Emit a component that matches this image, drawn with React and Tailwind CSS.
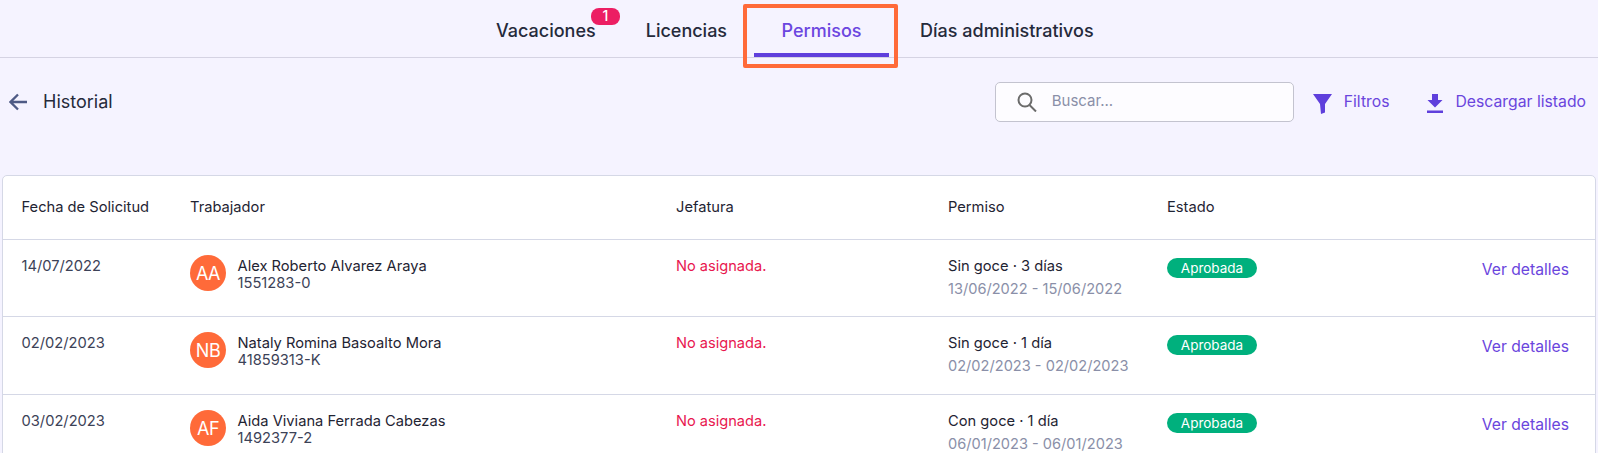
import React from "react";

const font = { fontFamily: "Inter, 'Noto Sans', sans-serif" };

const rows = [
  { date: "14/07/2022", ini: "AA", name: "Alex Roberto Alvarez Araya", id: "1551283-0", p: "Sin goce · 3 días", r: "13/06/2022 - 15/06/2022", h: "h-[77px]" },
  { date: "02/02/2023", ini: "NB", name: "Nataly Romina Basoalto Mora", id: "41859313-K", p: "Sin goce · 1 día", r: "02/02/2023 - 02/02/2023", h: "h-[78px]" },
  { date: "03/02/2023", ini: "AF", name: "Aida Viviana Ferrada Cabezas", id: "1492377-2", p: "Con goce · 1 día", r: "06/01/2023 - 06/01/2023", h: "h-[66px]" },
];

function Row({ row }) {
  return (
    <div className={`grid grid-cols-[168.5px_486px_272px_219px_1fr] pl-[18.5px] pr-[26px] border-t border-[#d5d8e6] ${row.h}`}>
      <div className="pt-[16px] text-[14.7px] leading-[20px] text-[#3c4257]">{row.date}</div>
      <div className="flex items-start pt-[15px] gap-[11.5px]">
        <div className="w-[36px] h-[36px] rounded-full bg-[#ff6a39] text-white flex items-center justify-center text-[18px] tracking-[-0.5px] shrink-0">{row.ini}</div>
        <div className="text-[14.7px] leading-[17px] pt-[3px]">
          <div className="text-[#1f2433]">{row.name}</div>
          <div className="text-[#3c4257]">{row.id}</div>
        </div>
      </div>
      <div className="pt-[16px] text-[14.6px] leading-[20px] text-[#e8174f]">No asignada.</div>
      <div className="pt-[16px]">
        <div className="text-[14.7px] leading-[20px] text-[#1f2433]">{row.p}</div>
        <div className="text-[14.6px] leading-[20px] mt-[3px] text-[#8a8fa8]">{row.r}</div>
      </div>
      <div className="flex items-start justify-between pt-[18px]">
        <span className="h-[20px] w-[90px] rounded-full bg-[#00b07d] text-white text-[13.500px] flex items-center justify-center">Aprobada</span>
        <span className="text-[15.7px] leading-[20px] text-[#6a45dd] mt-[2px]">Ver detalles</span>
      </div>
    </div>
  );
}

export default function App() {
  return (
    <div style={font} className="w-[1598px] h-[453px] overflow-hidden bg-[#f5f3ff]">
      <nav className="h-[58px] border-b border-[#d5d3e3] flex pl-[470px]">
        <div className="flex text-[18px] font-medium text-[#252a3b]">
          <div className="relative pl-[26px] pr-[24px] flex items-center pt-[3px]">
            Vacaciones
            <span className="absolute left-[121px] top-[8px] w-[29px] h-[17px] rounded-[8px] bg-[#ec1e63] text-white text-[14px] leading-[16px] text-center">1</span>
          </div>
          <div className="pl-[26px] pr-[27px] flex items-center pt-[3px]">Licencias</div>
          <div className="relative w-[135px] flex items-center justify-center pt-[3px] text-[#6b46e0]">
            Permisos
            <span className="absolute left-0 top-[53px] w-[135px] h-[4px] bg-[#5f3fdc]" />
            <span className="absolute -left-[11px] top-[4px] w-[155px] h-[64px] border-[4px] border-[#ff6a39] rounded-[2px]" />
          </div>
          <div className="pl-[31px] flex items-center pt-[3px]">Días administrativos</div>
        </div>
      </nav>

      <div className="h-[117px] flex items-start pl-[9px] pr-[12px] pt-[24px]">
        <div className="flex items-center gap-[16px] h-[40px]">
          <svg width="18" height="18" viewBox="0 0 18 18" fill="none" stroke="#4e5a85" strokeWidth="2.300">
            <path d="M18 9H1.500M9 1.500 1.500 9 9 16.500" />
          </svg>
          <span className="text-[18px] text-[#252a3b] -mt-[2px]">Historial</span>
        </div>
        <div className="ml-auto flex items-center h-[40px]">
          <div className="w-[299px] h-[40px] bg-[#fdfcff] border border-[#c3c3cf] rounded-[5px] flex items-center pl-[21px]">
            <svg width="20" height="20" viewBox="0 0 20 20" fill="none" stroke="#6b6b6b" strokeWidth="2">
              <circle cx="8" cy="8" r="6.500" />
              <path d="m12.500 13 6.500 6.500" />
            </svg>
            <span className="ml-[15px] text-[15px] text-[#8a8fa8] -mt-[2px]">Buscar...</span>
          </div>
          <div className="flex items-center ml-[19px] text-[15.75px] text-[#6a45dd]">
            <svg className="mt-[4px]" width="19" height="20" viewBox="0 0 19 20" fill="#5f3fdc">
              <path d="M0 0h19l-7 10v8.500L8 20l-1-10z" />
            </svg>
            <span className="ml-[12px]">Filtros</span>
          </div>
          <div className="flex items-center ml-[37px] text-[15.75px] text-[#6a45dd]">
            <svg className="mt-[3px]" width="16" height="19" viewBox="0 0 16 19" fill="#5f3fdc">
              <path d="M5 0h6v6h4.500L8 13.500.5 6H5z" />
              <rect x="0" y="16.500" width="16" height="2.500" />
            </svg>
            <span className="ml-[13px]">Descargar listado</span>
          </div>
        </div>
      </div>

      <div className="ml-[2px] mr-[2px] bg-white border border-[#d5d8e6] rounded-t-[5px]">
        <div className="grid grid-cols-[168.5px_486px_272px_219px_1fr] pl-[18.5px] pr-[26px] h-[63px] items-center text-[14.7px] text-[#1f2433]">
          <div>Fecha de Solicitud</div>
          <div>Trabajador</div>
          <div>Jefatura</div>
          <div>Permiso</div>
          <div>Estado</div>
        </div>
        {rows.map((r) => <Row key={r.date} row={r} />)}
      </div>
    </div>
  );
}
